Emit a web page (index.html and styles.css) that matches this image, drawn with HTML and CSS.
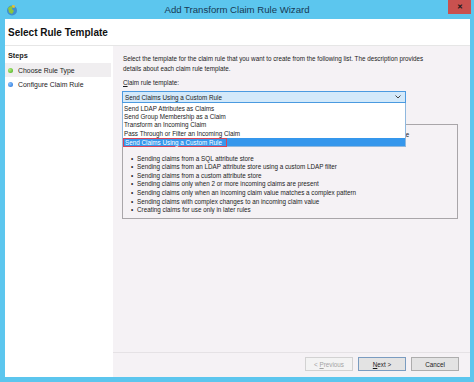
FILE: index.html
```html
<!DOCTYPE html>
<html lang="en">

<head>
    <meta charset="UTF-8">
    <title>Add Transform Claim Rule Wizard</title>
    <link rel="stylesheet" href="styles.css">
</head>

<body>
    <div class="window">
        <div class="titlebar">
            <div class="app-icon">
                <svg width="12" height="12" viewBox="0 0 12 12">
                    <circle cx="6" cy="6.5" r="5" fill="#3f8fd0" />
                    <path d="M2 4 Q4 1.5 7 2 L6 5 L8 7 L6 10 L3 8.5 Z" fill="#8cc63f" />
                    <path d="M6 1 L9 1.5 L8.5 4 L6.5 3.5 Z" fill="#f2c12e" />
                </svg>
            </div>
            <div class="title">Add Transform Claim Rule Wizard</div>
            <div class="close">&#x2715;</div>
        </div>

        <div class="frame">
            <div class="header">Select Rule Template</div>

            <div class="main">
                <div class="steps">
                    <div class="steps-title">Steps</div>
                    <div class="step current"><span class="dot green"></span>Choose Rule Type</div>
                    <div class="step"><span class="dot blue"></span>Configure Claim Rule</div>
                </div>

                <div class="pane">
                    <div class="content">
                        <p class="intro">Select the template for the claim rule that you want to create from the following list. The description provides<br>
                            details about each claim rule template.</p>

                        <div class="label"><u>C</u>laim rule template:</div>

                        <div class="combo">
                            <div class="combo-box">
                                <span>Send Claims Using a Custom Rule</span>
                                <svg class="chevron" width="6" height="4" viewBox="0 0 6 4">
                                    <path d="M0.5 0.5 L3 3 L5.5 0.5" fill="none" stroke="#444" stroke-width="1" />
                                </svg>
                            </div>
                            <div class="combo-list">
                                <div class="option">Send LDAP Attributes as Claims</div>
                                <div class="option">Send Group Membership as a Claim</div>
                                <div class="option">Transform an Incoming Claim</div>
                                <div class="option">Pass Through or Filter an Incoming Claim</div>
                                <div class="option selected"><span>Send Claims Using a Custom Rule</span></div>
                            </div>
                        </div>

                        <div class="description">
                            <p class="desc-line">Using a custom rule, you can create rules that can't be created with a rule template. Custom rules are</p>
                            <ul>
                                <li>Sending claims from a SQL attribute store</li>
                                <li>Sending claims from an LDAP attribute store using a custom LDAP filter</li>
                                <li>Sending claims from a custom attribute store</li>
                                <li>Sending claims only when 2 or more incoming claims are present</li>
                                <li>Sending claims only when an incoming claim value matches a complex pattern</li>
                                <li>Sending claims with complex changes to an incoming claim value</li>
                                <li>Creating claims for use only in later rules</li>
                            </ul>
                        </div>
                    </div>

                    <div class="footer">
                        <div class="btn disabled">&lt;&nbsp;<u>P</u>revious</div>
                        <div class="btn default"><u>N</u>ext&nbsp;&gt;</div>
                        <div class="btn">Cancel</div>
                    </div>
                </div>
            </div>
        </div>
    </div>
</body>

</html>
```

FILE: styles.css
```css
* {
    padding: 0px;
    margin: 0px;

    box-sizing: border-box;
}

html,
body {
    width: 100%;
    height: 100%;
}

body {
    font-family: "Liberation Sans", Arial, sans-serif;
    font-size: 6.3px;
    color: #1b1b1b;
}

.window {
    width: 474px;
    height: 382px;
    background-color: #5cc6ee;

    display: flex;
    flex-direction: column;
}

.titlebar {
    height: 19px;
    display: grid;
    grid-template-columns: 1fr auto 1fr;
    align-items: center;
}

.app-icon {
    padding-left: 6px;
    display: flex;
    align-items: center;
}

.title {
    font-size: 9.6px;
    color: #173a55;
}

.close {
    justify-self: end;
    align-self: start;

    width: 23px;
    height: 14px;
    margin-right: 3px;

    background-color: #c9514f;
    color: #1a1a1a;
    font-size: 7px;
    font-weight: bold;

    display: flex;
    align-items: center;
    justify-content: center;
}

.frame {
    flex: 1;
    margin: 0 4px 5px 5px;
    background-color: #ffffff;

    display: flex;
    flex-direction: column;
}

.header {
    height: 27px;
    padding-left: 3px;
    border-bottom: 1px solid #e6e6e6;

    font-size: 10px;
    font-weight: bold;
    color: #111;

    display: flex;
    align-items: center;
}

.main {
    flex: 1;
    display: flex;
}

.steps {
    width: 108px;
    padding-top: 5px;
}

.steps-title {
    padding-left: 3px;
    height: 12px;
    font-size: 7.3px;
    font-weight: bold;
    line-height: 9px;
}

.step {
    height: 14px;
    margin-right: 2px;
    padding-left: 13px;

    font-size: 6.9px;
    color: #222;

    display: flex;
    align-items: center;
    position: relative;
}

.step.current {
    background-color: #f0eef0;
}

.dot {
    position: absolute;
    left: 3px;
    top: 5px;
    width: 5px;
    height: 5px;
    border-radius: 50%;
}

.dot.green {
    background: radial-gradient(circle at 35% 35%, #b5f07a, #3fa81d);
}

.dot.blue {
    background: radial-gradient(circle at 35% 35%, #8cc4ff, #1f6fd6);
}

.pane {
    flex: 1;
    background-color: #f5f2f5;

    display: flex;
    flex-direction: column;
}

.content {
    flex: 1;
    padding: 8px 12px 0 9px;
}

.intro {
    padding-left: 1px;
    line-height: 10px;
}

.label {
    margin-top: 4px;
    padding-left: 1px;
    line-height: 9px;
}

.combo {
    position: relative;
    width: 284px;
    margin-top: 4px;
}

.combo-box {
    height: 12px;
    padding: 0 4px 0 2px;
    background-color: #d3e9fa;
    border: 1px solid #4b9ae0;

    display: flex;
    align-items: center;
    justify-content: space-between;
}

.combo-list {
    position: absolute;
    top: 100%;
    left: 0;
    width: 100%;
    z-index: 2;

    padding-top: 2px;
    background-color: #ffffff;
    border: 1px solid #8fb8de;
    border-top: none;
}

.option {
    height: 8.2px;
    line-height: 8.2px;
    padding-left: 1px;
}

.option.selected {
    padding-left: 0;
    background-color: #3597ec;
    color: #ffffff;
}

.option.selected span {
    display: inline-block;
    height: 9px;
    line-height: 8px;
    padding: 0 4px 0 1px;
    border: 1px solid #d8435a;
}

.description {
    margin-top: 21px;
    height: 95px;
    padding: 6px 4px 0 4px;
    border: 1px solid #a9a6a9;
    line-height: 8.6px;
}

.description ul {
    margin-top: 15px;
    padding-left: 4px;
    list-style: none;
}

.description li::before {
    content: "\2022";
    display: inline-block;
    width: 6px;
}

.footer {
    border-top: 1px solid #e5e2e5;
    padding: 4px 11px 6px 0;

    display: flex;
    justify-content: flex-end;
    gap: 5px;
}

.btn {
    width: 48px;
    height: 14px;
    background-color: #e3e3e3;
    border: 1px solid #adadad;

    display: flex;
    align-items: center;
    justify-content: center;
}

.btn.disabled {
    background-color: #f3f3f3;
    border-color: #d2d2d2;
    color: #a3a3a3;
}

.btn.default {
    border-color: #7a9cc0;
}
```
